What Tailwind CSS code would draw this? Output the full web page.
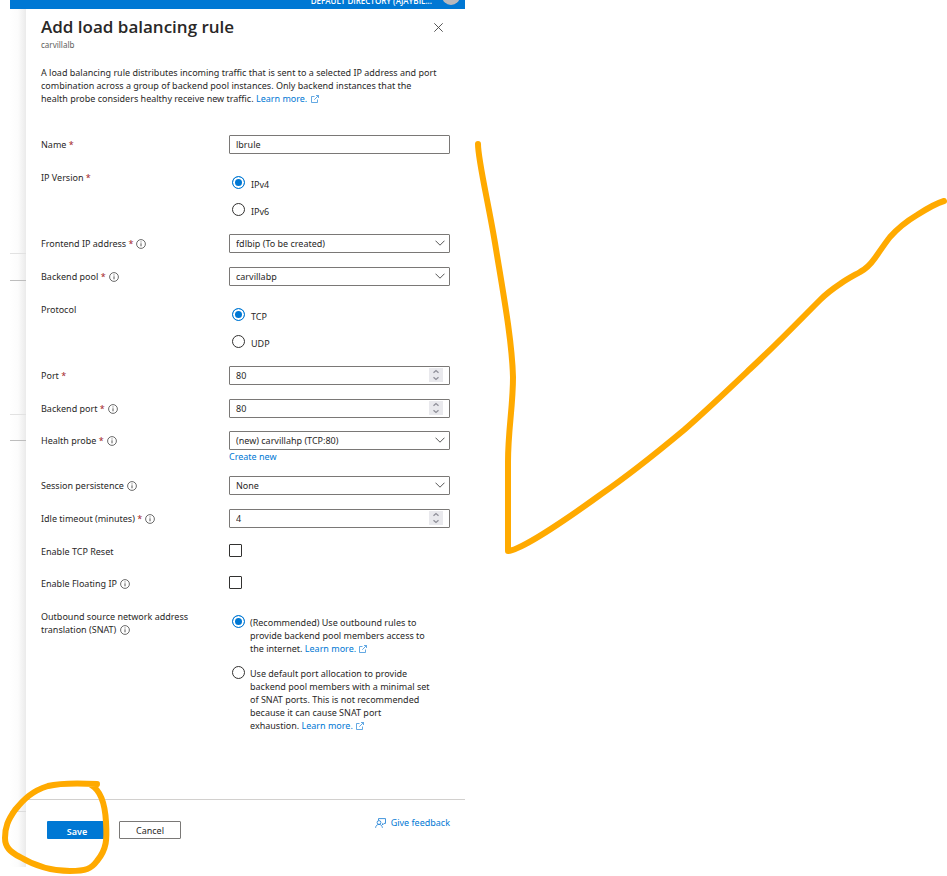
<!DOCTYPE html>
<html lang="en">
<head>
<meta charset="utf-8">
<meta name="viewport" content="width=device-width, initial-scale=1">
<title>Add load balancing rule</title>
<script src="https://cdn.jsdelivr.net/npm/@tailwindcss/browser@4"></script>
</head>
<body class="relative min-h-screen overflow-x-hidden bg-white font-['Noto_Sans','Open_Sans',sans-serif] text-[9px] leading-[13px] text-[#292827]">
<svg class="hidden">
  <symbol id="info" viewBox="0 0 10 10"><circle cx="5" cy="5" r="4.4" fill="none" stroke="#444" stroke-width=".8"/><path d="M5 4.3v3M5 2.5v.9" stroke="#444" stroke-width=".9"/></symbol>
  <symbol id="ext" viewBox="0 0 8 8"><path d="M3.500 1.500h-3v6h6v-3M5 .5h2.500V3M7.500.5 3.300 4.700" fill="none" stroke="#3c93dc" stroke-width=".8"/></symbol>
  <symbol id="chev" viewBox="0 0 10 6"><path d="M.5.7 5 5.200 9.500.7" fill="none" stroke="#444" stroke-width=".9"/></symbol>
  <symbol id="spin" viewBox="0 0 14 14"><path d="M4.500 4.700 7 2.500l2.500 2.200M4.500 9.300 7 11.500l2.500-2.200" fill="none" stroke="#8f8f98" stroke-width="1.300"/></symbol>
</svg>

<div class="w-full max-w-[465px] pl-[10px]">
  <header class="flex h-[9px] items-end justify-end gap-[10px] overflow-hidden bg-[#0078d4] pr-[5px] text-[8px] font-semibold text-white">
    <span class="mb-[2px] font-['Open_Sans',sans-serif] leading-[13px]">DEFAULT DIRECTORY (AJAYBIL...</span>
    <span class="mb-[4px] size-[18px] shrink-0 rounded-full bg-[#b9b9bd]"></span>
  </header>

  <div class="flex">
    <div class="w-[16px] shrink-0 bg-linear-to-r from-white via-[#fcfcfc] to-[#ebebeb]">
      <div class="h-[245px] border-b border-[#e2e2e2]"></div>
      <div class="h-[27px] border-b border-[#bdbdbd]"></div>
      <div class="h-[134px] border-b border-[#e2e2e2]"></div>
      <div class="h-[26px] border-b border-[#bdbdbd]"></div>
      <div class="h-[371px] border-b border-[#dcdcdc]"></div>
    </div>

    <main class="min-w-0 flex-1 bg-white">
      <div class="px-[15px] pt-[6px]">
        <div class="flex items-start justify-between">
          <div>
            <h1 class="font-['Open_Sans',sans-serif] text-[17px] leading-[23px] font-semibold">Add load balancing rule</h1>
            <p class="text-[8px] text-[#605e5c]">carvillalb</p>
          </div>
          <button type="button" aria-label="Close" class="mt-2 mr-[7px]">
            <svg class="size-[9px]" viewBox="0 0 9 9"><path d="M.3.3 8.700 8.700M8.700.3.3 8.700" stroke="#444" stroke-width=".9"/></svg>
          </button>
        </div>
        <p class="mt-[15px] whitespace-nowrap">A load balancing rule distributes incoming traffic that is sent to a selected IP address and port<br>combination across a group of backend pool instances. Only backend instances that the<br>health probe considers healthy receive new traffic. <a href="#" class="text-[#0078d4]">Learn more. <svg class="ml-px inline size-2 align-[-1px]"><use href="#ext"/></svg></a></p>
      </div>

      <form class="mt-[30px] px-[15px]">
        <div class="grid min-h-[33px] grid-cols-[188px_1fr] items-start">
          <label for="name" class="pt-[3px]">Name <span class="text-[#a4262c]">*</span></label>
          <input id="name" type="text" value="lbrule" class="h-[19px] w-full rounded-[1px] border border-[#7a7876] px-[6px]">
        </div>

        <div role="radiogroup" aria-labelledby="ipv" class="grid min-h-[66px] grid-cols-[188px_1fr] items-start">
          <span id="ipv" class="pt-[3px]">IP Version <span class="text-[#a4262c]">*</span></span>
          <div class="flex flex-col gap-[14px] pt-[8px] pl-[3px]">
            <label class="flex h-[13px] gap-[6px]"><input type="radio" name="ip" checked class="size-[13px] shrink-0 appearance-none rounded-full border border-[#323130] checked:border-[#0078d4] checked:bg-[#0078d4] checked:shadow-[inset_0_0_0_2px_white]"><span class="pt-[2px]">IPv4</span></label>
            <label class="flex h-[13px] gap-[6px]"><input type="radio" name="ip" class="size-[13px] shrink-0 appearance-none rounded-full border border-[#323130] checked:border-[#0078d4] checked:bg-[#0078d4] checked:shadow-[inset_0_0_0_2px_white]"><span class="pt-[2px]">IPv6</span></label>
          </div>
        </div>

        <div class="grid min-h-[33px] grid-cols-[188px_1fr] items-start">
          <label for="fip" class="flex items-center gap-[3px] pt-[3px]"><span>Frontend IP address <span class="text-[#a4262c]">*</span></span><svg class="size-[10px]"><use href="#info"/></svg></label>
          <div class="relative">
            <select id="fip" class="block h-[19px] w-full appearance-none rounded-[1px] border border-[#7a7876] px-[6px]"><option>fdlbip (To be created)</option></select>
            <svg class="pointer-events-none absolute top-[6px] right-[5px] h-[6px] w-[10px]"><use href="#chev"/></svg>
          </div>
        </div>

        <div class="grid min-h-[33px] grid-cols-[188px_1fr] items-start">
          <label for="bp" class="flex items-center gap-[3px] pt-[3px]"><span>Backend pool <span class="text-[#a4262c]">*</span></span><svg class="size-[10px]"><use href="#info"/></svg></label>
          <div class="relative">
            <select id="bp" class="block h-[19px] w-full appearance-none rounded-[1px] border border-[#7a7876] px-[6px]"><option>carvillabp</option></select>
            <svg class="pointer-events-none absolute top-[6px] right-[5px] h-[6px] w-[10px]"><use href="#chev"/></svg>
          </div>
        </div>

        <div role="radiogroup" aria-labelledby="proto" class="grid min-h-[66px] grid-cols-[188px_1fr] items-start">
          <span id="proto" class="pt-[3px]">Protocol</span>
          <div class="flex flex-col gap-[14px] pt-[8px] pl-[3px]">
            <label class="flex h-[13px] gap-[6px]"><input type="radio" name="proto" checked class="size-[13px] shrink-0 appearance-none rounded-full border border-[#323130] checked:border-[#0078d4] checked:bg-[#0078d4] checked:shadow-[inset_0_0_0_2px_white]"><span class="pt-[2px]">TCP</span></label>
            <label class="flex h-[13px] gap-[6px]"><input type="radio" name="proto" class="size-[13px] shrink-0 appearance-none rounded-full border border-[#323130] checked:border-[#0078d4] checked:bg-[#0078d4] checked:shadow-[inset_0_0_0_2px_white]"><span class="pt-[2px]">UDP</span></label>
          </div>
        </div>

        <div class="grid min-h-[33px] grid-cols-[188px_1fr] items-start">
          <label for="port" class="pt-[3px]">Port <span class="text-[#a4262c]">*</span></label>
          <div class="relative">
            <input id="port" type="number" value="80" class="block h-[19px] w-full rounded-[1px] border border-[#7a7876] px-[6px] [appearance:textfield]">
            <svg class="pointer-events-none absolute top-[2px] right-[7px] size-[14px] bg-[#e9e9ed]"><use href="#spin"/></svg>
          </div>
        </div>

        <div class="grid min-h-[32px] grid-cols-[188px_1fr] items-start">
          <label for="bport" class="flex items-center gap-[3px] pt-[3px]"><span>Backend port <span class="text-[#a4262c]">*</span></span><svg class="size-[10px]"><use href="#info"/></svg></label>
          <div class="relative">
            <input id="bport" type="number" value="80" class="block h-[19px] w-full rounded-[1px] border border-[#7a7876] px-[6px] [appearance:textfield]">
            <svg class="pointer-events-none absolute top-[2px] right-[7px] size-[14px] bg-[#e9e9ed]"><use href="#spin"/></svg>
          </div>
        </div>

        <div class="grid min-h-[45px] grid-cols-[188px_1fr] items-start">
          <label for="hp" class="flex items-center gap-[3px] pt-[3px]"><span>Health probe <span class="text-[#a4262c]">*</span></span><svg class="size-[10px]"><use href="#info"/></svg></label>
          <div>
            <div class="relative">
              <select id="hp" class="block h-[19px] w-full appearance-none rounded-[1px] border border-[#7a7876] px-[6px]"><option>(new) carvillahp (TCP:80)</option></select>
              <svg class="pointer-events-none absolute top-[6px] right-[5px] h-[6px] w-[10px]"><use href="#chev"/></svg>
            </div>
            <a href="#" class="block text-[#0078d4]">Create new</a>
          </div>
        </div>

        <div class="grid min-h-[33px] grid-cols-[188px_1fr] items-start">
          <label for="sp" class="flex items-center gap-[3px] pt-[3px]"><span>Session persistence</span><svg class="size-[10px]"><use href="#info"/></svg></label>
          <div class="relative">
            <select id="sp" class="block h-[19px] w-full appearance-none rounded-[1px] border border-[#7a7876] px-[6px]"><option>None</option></select>
            <svg class="pointer-events-none absolute top-[6px] right-[5px] h-[6px] w-[10px]"><use href="#chev"/></svg>
          </div>
        </div>

        <div class="grid min-h-[33px] grid-cols-[188px_1fr] items-start">
          <label for="idle" class="flex items-center gap-[3px] pt-[3px]"><span>Idle timeout (minutes) <span class="text-[#a4262c]">*</span></span><svg class="size-[10px]"><use href="#info"/></svg></label>
          <div class="relative">
            <input id="idle" type="number" value="4" class="block h-[19px] w-full rounded-[1px] border border-[#7a7876] px-[6px] [appearance:textfield]">
            <svg class="pointer-events-none absolute top-[2px] right-[7px] size-[14px] bg-[#e9e9ed]"><use href="#spin"/></svg>
          </div>
        </div>

        <div class="grid min-h-[32px] grid-cols-[188px_1fr] items-start">
          <label for="rst" class="pt-[3px]">Enable TCP Reset</label>
          <input id="rst" type="checkbox" class="mt-[2px] size-[13px] appearance-none rounded-[1px] border border-[#323130] checked:bg-[#0078d4]">
        </div>

        <div class="grid min-h-[33px] grid-cols-[188px_1fr] items-start">
          <label for="flt" class="flex items-center gap-[3px] pt-[3px]"><span>Enable Floating IP</span><svg class="size-[10px]"><use href="#info"/></svg></label>
          <input id="flt" type="checkbox" class="mt-[2px] size-[13px] appearance-none rounded-[1px] border border-[#323130] checked:bg-[#0078d4]">
        </div>

        <div role="radiogroup" aria-labelledby="snat" class="grid grid-cols-[188px_1fr] items-start">
          <span id="snat" class="pt-[3px]">Outbound source network address<br>translation (SNAT) <svg class="ml-px inline size-[10px] align-[-2px]"><use href="#info"/></svg></span>
          <div class="flex flex-col gap-[11px] pt-[8px] pl-[3px]">
            <label class="flex gap-[5px]"><input type="radio" name="snat" checked class="size-[13px] shrink-0 appearance-none rounded-full border border-[#323130] checked:border-[#0078d4] checked:bg-[#0078d4] checked:shadow-[inset_0_0_0_2px_white]"><span class="pt-px whitespace-nowrap">(Recommended) Use outbound rules to<br>provide backend pool members access to<br>the internet. <a href="#" class="text-[#0078d4]">Learn more. <svg class="ml-px inline size-2 align-[-1px]"><use href="#ext"/></svg></a></span></label>
            <label class="flex gap-[5px]"><input type="radio" name="snat" class="size-[13px] shrink-0 appearance-none rounded-full border border-[#323130] checked:border-[#0078d4] checked:bg-[#0078d4] checked:shadow-[inset_0_0_0_2px_white]"><span class="pt-px whitespace-nowrap">Use default port allocation to provide<br>backend pool members with a minimal set<br>of SNAT ports. This is not recommended<br>because it can cause SNAT port<br>exhaustion. <a href="#" class="text-[#0078d4]">Learn more. <svg class="ml-px inline size-2 align-[-1px]"><use href="#ext"/></svg></a></span></label>
          </div>
        </div>
      </form>

      <footer class="mt-[67px] flex items-start border-t border-[#d2d0ce] pt-[21px] pr-[15px] pb-[28px] pl-[21px]">
        <button type="button" class="h-[18px] w-[60px] rounded-[1px] bg-[#0078d4] pt-[2px] font-semibold text-white">Save</button>
        <button type="button" class="ml-[12px] h-[18px] w-[62px] rounded-[1px] border border-[#7a7876] pt-px">Cancel</button>
        <a href="#" class="-mt-[5px] ml-auto flex items-center gap-[5px] text-[#0078d4]"><svg class="h-[10px] w-[11px]" viewBox="0 0 11 10" fill="none" stroke="#2b88d8" stroke-width=".9"><path d="M3.500 2.500V.6h7v4.800H9L7.500 7V5.400"/><circle cx="4" cy="4.500" r="1.900"/><path d="M.6 9.800C.8 7.600 2.200 6.400 4 6.400s3.200 1.200 3.400 3.400"/></svg>Give feedback</a>
      </footer>
    </main>
  </div>
</div>

<svg class="pointer-events-none absolute top-0 left-0 h-[876px] w-[947px]" viewBox="0 0 947 876" fill="none" stroke="#ffaa00" stroke-width="6" stroke-linecap="round" stroke-linejoin="round" aria-hidden="true">
  <path d="M478 144C478 160 488 201 495 243C503 292 512 340 513 377C513 407 508 430 508 462V551C520 550 560 524 600 495C632 473 660 450 684 430C708 409 730 388 750 369C775 346 800 320 820 300C828 292 834 288 840 284C847 279 853 276 860 272C866 269 870 265 875 258C882 248 886 242 890 237C898 228 907 221 917 215C928 208 937 203 944 201"/>
  <path d="M97 784C78 783 60 783 48 786C32 791 24 799 15 810C8 820 5 827 5 838C5 847 10 852 20 857C35 866 54 871 70 871C86 871 91 869 97 861C107 849 107 839 106 822C105 803 100 790 91 785"/>
</svg>
</body>
</html>
